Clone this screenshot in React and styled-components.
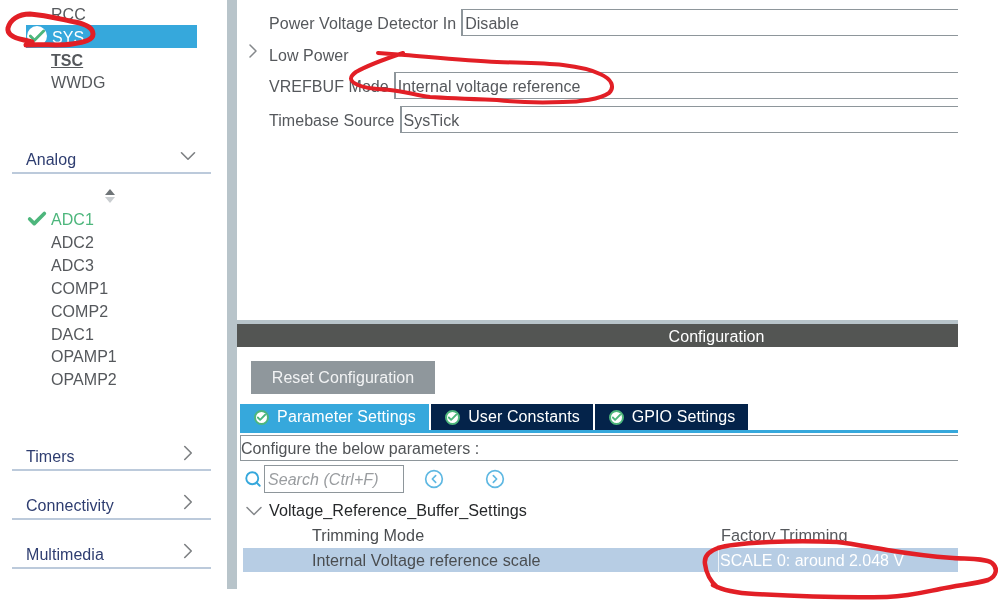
import React from "react";
import styled, { createGlobalStyle } from "styled-components";
import { Check, ChevronDown, ChevronRight, CircleChevronLeft, CircleChevronRight, Search } from "lucide-react";

const Global = createGlobalStyle`
  html, body { margin: 0; padding: 0; background: #fff; }
  body { font-family: "Liberation Sans", Arial, sans-serif; font-size: 16px; letter-spacing: 0.05px; color: #55585c; }
  * { box-sizing: border-box; }
`;

// the reference is a slightly upscaled screenshot, so everything is a bit soft
const Page = styled.div`
  position: relative;
  width: 999px;
  height: 603px;
  display: flex;
  overflow: hidden;
  background: #fff;
  filter: blur(0.3px);
`;

const Sidebar = styled.aside`
  width: 227px;
  flex: none;
  padding-top: 2px;
`;

const PeripheralList = styled.ul`
  list-style: none;
  margin: 0;
  padding: 0 0 0 26px;
  width: 197px;
`;

const Peripheral = styled.li`
  height: 22.85px;
  line-height: 22px;
  display: flex;
  align-items: center;
  padding: 3px 0 0 ${(p) => (p.$icon ? "0" : "25px")};
  color: ${(p) => (p.$ok ? "#4db67c" : p.$active ? "#fff" : "#55585c")};
  background: ${(p) => (p.$active ? "#36a8dc" : "transparent")};
  font-weight: ${(p) => (p.$bold ? "700" : "400")};
  text-decoration: ${(p) => (p.$bold ? "underline" : "none")};
`;

const CheckSlot = styled.span`
  width: ${(p) => p.$w}px;
  height: 22px;
  margin-top: -3px;
  flex: none;
  display: flex;
  align-items: center;
  color: #4db67c;
  svg { flex: none; }
`;

const RoundCheck = styled.span`
  width: 20px;
  height: 20px;
  margin-left: 1px;
  border-radius: 50%;
  background: #fff;
  display: flex;
  align-items: center;
  justify-content: center;
  color: #4db67c;
`;

const Section = styled.div`
  margin: ${(p) => p.$top}px 16px 0 12px;
  height: 26px;
  padding: 0 10px 0 14px;
  display: flex;
  align-items: center;
  justify-content: space-between;
  border-bottom: 2px solid #bccadb;
  color: #2e3d70;
  line-height: 22px;
  svg { flex: none; color: #7d8083; margin-top: -9px; }
`;

const SortArrows = styled.div`
  height: 16px;
  margin: 15px 0 2px 105px;
  width: 11px;
  display: flex;
  flex-direction: column;
  gap: 2px;
`;

const Arrow = styled.span`
  width: 0;
  height: 0;
  border-left: 5px solid transparent;
  border-right: 5px solid transparent;
  border-bottom: ${(p) => (p.$up ? "6px solid #6f7477" : "none")};
  border-top: ${(p) => (p.$up ? "none" : "6px solid #c9cdd0")};
`;

const Splitter = styled.div`
  width: 10px;
  height: 589px;
  flex: none;
  background: #b8c4ca;
`;

const Main = styled.main`
  width: 721px;
  height: 589px;
  flex: none;
  display: flex;
  flex-direction: column;
`;

const TopPane = styled.section`
  height: 320px;
  flex: none;
  padding: 9px 0 0 32px;
`;

const FieldRow = styled.div`
  display: flex;
  align-items: center;
  height: 27px;
  margin-top: ${(p) => p.$top || 0}px;
`;

const FieldLabel = styled.span`
  white-space: nowrap;
  padding-top: 2px;
  margin-right: ${(p) => p.$gap}px;
`;

const FieldValue = styled.div`
  flex: 1;
  height: 27px;
  line-height: 27px;
  padding-left: 2px;
  border: 1px solid #8e969b;
  border-right: 0;
  border-left-width: 2px;
  color: #55585c;
`;

const GroupRow = styled.div`
  position: relative;
  height: 23px;
  margin-top: 7px;
  line-height: 25px;
  svg { position: absolute; left: -28px; top: -4px; color: #85888b; }
`;

const BottomPane = styled.section`
  flex: 1;
  display: flex;
  flex-direction: column;
  border-top: 4px solid #b8c4ca;
`;

const PaneTitle = styled.div`
  height: 23px;
  flex: none;
  background: #535553;
  color: #fff;
  line-height: 25px;
  text-align: center;
  padding-left: 238px;
`;

const ResetButton = styled.button`
  display: block;
  width: 184px;
  height: 33px;
  margin: 14px 0 0 14px;
  border: 0;
  background: #8f979c;
  color: #f2f3f4;
  font: inherit;
  letter-spacing: inherit;
  padding: 0;
`;

const TabBar = styled.div`
  display: flex;
  gap: 2px;
  height: 29px;
  margin: 10px 0 0 3px;
  border-bottom: 3px solid #36a8dc;
`;

const Tab = styled.div`
  width: ${(p) => p.$w}px;
  height: 26px;
  padding-left: 1px;
  display: flex;
  align-items: center;
  justify-content: center;
  gap: 8px;
  color: #fff;
  letter-spacing: 0.1px;
  background: ${(p) => (p.$active ? "#36a8dc" : "#04234a")};
`;

const TabCheck = styled.span`
  width: 15px;
  height: 15px;
  border-radius: 50%;
  background: #fff;
  border: 2px solid #4db67c;
  display: flex;
  align-items: center;
  justify-content: center;
  color: #4db67c;
`;

const ConfigureBox = styled.div`
  height: 26px;
  margin: 2px 0 0 3px;
  border: 1px solid #8e969b;
  border-right: 0;
  line-height: 26px;
  color: #505356;
`;

const SearchRow = styled.div`
  display: flex;
  align-items: center;
  height: 28px;
  margin: 4px 0 0 7px;
  color: #36a8dc;
  svg { flex: none; }
`;

const SearchInput = styled.div`
  width: 140px;
  height: 28px;
  margin: 0 20px 0 2px;
  border: 1px solid #8e969b;
  padding-left: 3px;
  line-height: 27px;
  font-style: italic;
  color: #9a9da0;
`;

const NavButton = styled.span`
  display: flex;
  width: 20px;
  margin-right: ${(p) => p.$gap || 0}px;
  color: #5fb8e2;
`;

const TreeHead = styled.div`
  display: flex;
  align-items: center;
  height: 23px;
  margin: 6px 0 0 3px;
  font-size: 16.15px;
  color: #26282a;
  svg { flex: none; color: #85888b; margin-right: 1px; }
`;

const TreeRow = styled.div`
  display: grid;
  grid-template-columns: 406px 1fr;
  height: 24px;
  margin: ${(p) => p.$top || 0}px 0 0 6px;
  line-height: ${(p) => (p.$selected ? "25px" : "23px")};
  font-size: 16.15px;
  padding-left: 69px;
  background: ${(p) => (p.$selected ? "#b7cde4" : "transparent")};
  color: #4a4d50;
`;

const TreeValue = styled.span`
  padding-left: ${(p) => (p.$selected ? "1px" : "2px")};
  font-size: ${(p) => (p.$selected ? "16px" : "16.3px")};
  letter-spacing: ${(p) => (p.$selected ? "0" : "0.05px")};
  white-space: nowrap;
  color: ${(p) => (p.$selected ? "#fff" : "#55585c")};
  border-left: 1px solid ${(p) => (p.$selected ? "#eef3f8" : "transparent")};
`;

const Scribbles = styled.svg`
  position: absolute;
  inset: 0;
  pointer-events: none;
`;

const Ink = styled.path`
  fill: none;
  stroke: #e21f26;
  stroke-width: ${(p) => p.$w};
  stroke-linecap: round;
  stroke-linejoin: round;
`;

const analog = ["ADC2", "ADC3", "COMP1", "COMP2", "DAC1", "OPAMP1", "OPAMP2"];

function OkIcon() {
  return <Check size={11} strokeWidth={4} />;
}

export default function App() {
  return (
    <Page>
      <Global />
      <Sidebar>
        <PeripheralList>
          <Peripheral>RCC</Peripheral>
          <Peripheral $active $icon>
            <CheckSlot $w={26}>
              <RoundCheck>
                <Check size={20} strokeWidth={3.5} />
              </RoundCheck>
            </CheckSlot>
            SYS
          </Peripheral>
          <Peripheral $bold>TSC</Peripheral>
          <Peripheral>WWDG</Peripheral>
        </PeripheralList>
        <Section $top={55}>
          Analog
          <ChevronDown size={26} strokeWidth={1.5} />
        </Section>
        <SortArrows>
          <Arrow $up />
          <Arrow />
        </SortArrows>
        <PeripheralList>
          <Peripheral $ok $icon>
            <CheckSlot $w={25}>
              <Check size={22} strokeWidth={4} />
            </CheckSlot>
            ADC1
          </Peripheral>
          {analog.map((name) => (
            <Peripheral key={name}>{name}</Peripheral>
          ))}
        </PeripheralList>
        <Section $top={55}>
          Timers
          <ChevronRight size={26} strokeWidth={1.5} />
        </Section>
        <Section $top={23}>
          Connectivity
          <ChevronRight size={26} strokeWidth={1.5} />
        </Section>
        <Section $top={23}>
          Multimedia
          <ChevronRight size={26} strokeWidth={1.5} />
        </Section>
      </Sidebar>
      <Splitter />
      <Main>
        <TopPane>
          <FieldRow>
            <FieldLabel $gap={5}>Power Voltage Detector In</FieldLabel>
            <FieldValue>Disable</FieldValue>
          </FieldRow>
          <GroupRow>
            <ChevronRight size={24} strokeWidth={1.5} />
            Low Power
          </GroupRow>
          <FieldRow $top={6}>
            <FieldLabel $gap={5}>VREFBUF Mode</FieldLabel>
            <FieldValue>Internal voltage reference</FieldValue>
          </FieldRow>
          <FieldRow $top={7}>
            <FieldLabel $gap={5}>Timebase Source</FieldLabel>
            <FieldValue>SysTick</FieldValue>
          </FieldRow>
        </TopPane>
        <BottomPane>
          <PaneTitle>Configuration</PaneTitle>
          <ResetButton>Reset Configuration</ResetButton>
          <TabBar>
            <Tab $active $w={189}>
              <TabCheck><OkIcon /></TabCheck>
              Parameter Settings
            </Tab>
            <Tab $w={162}>
              <TabCheck><OkIcon /></TabCheck>
              User Constants
            </Tab>
            <Tab $w={153}>
              <TabCheck><OkIcon /></TabCheck>
              GPIO Settings
            </Tab>
          </TabBar>
          <ConfigureBox>Configure the below parameters :</ConfigureBox>
          <SearchRow>
            <Search size={18} strokeWidth={2.5} />
            <SearchInput>Search (Ctrl+F)</SearchInput>
            <NavButton $gap={41}><CircleChevronLeft size={20} strokeWidth={2} /></NavButton>
            <NavButton><CircleChevronRight size={20} strokeWidth={2} /></NavButton>
          </SearchRow>
          <TreeHead>
            <ChevronDown size={28} strokeWidth={1.3} />
            Voltage_Reference_Buffer_Settings
          </TreeHead>
          <TreeRow $top={2}>
            <span>Trimming Mode</span>
            <TreeValue>Factory Trimming</TreeValue>
          </TreeRow>
          <TreeRow $selected>
            <span>Internal Voltage reference scale</span>
            <TreeValue $selected>SCALE 0: around 2.048 V</TreeValue>
          </TreeRow>
        </BottomPane>
      </Main>
      <Scribbles width="999" height="603" viewBox="0 0 999 603">
        <Ink $w={5} d="M26 45 C45 44 60 46 72 44 C85 42 93 40 93 34 C93 27 85 24 75 22 C60 19 45 15 30 14 C18 14 10 20 8 28 C7 34 14 38 24 40 L32 42" />
        <Ink $w={4} d="M378 53 L405 55 C440 58 470 61 497 62 C530 63 545 63 563 65 C580 67 592 70 600 74 C612 79 615 87 609 93 C600 99 580 102 563 102 C540 103 515 102 497 100 C470 99 445 98 430 97 C415 95 403 91 390 90 C378 89 367 89 358 85 C349 81 349 77 356 72 C370 64 388 58 403 53" />
        <Ink $w={4.5} d="M713 585 C722 590 735 593 755 594 C790 596 850 598 887 597 C910 596 925 592 940 589 C958 585 975 584 988 580 C997 576 998 568 992 563 C985 558 968 559 953 558 C925 556 905 553 887 550 C868 547 855 544 837 542 C815 541 790 541 770 542 C750 543 730 544 718 548 C707 552 704 558 705 564 C706 573 711 582 717 587" />
      </Scribbles>
    </Page>
  );
}
